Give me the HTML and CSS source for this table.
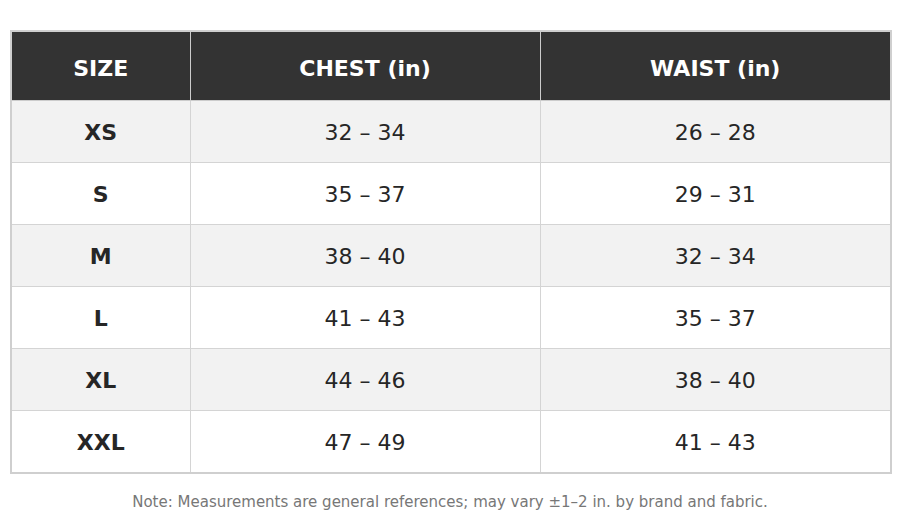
FILE: index.html
```html
<!DOCTYPE html>
<html>
<head>
<meta charset="utf-8">
<link rel="stylesheet" href="styles.css">
</head>
<body>
<div class="page">
  <table class="size-table">
    <colgroup><col class="c1"><col class="c2"><col class="c3"></colgroup>
    <thead>
      <tr><th>SIZE</th><th>CHEST (in)</th><th>WAIST (in)</th></tr>
    </thead>
    <tbody>
      <tr><td class="sz">XS</td><td>32 – 34</td><td>26 – 28</td></tr>
      <tr><td class="sz">S</td><td>35 – 37</td><td>29 – 31</td></tr>
      <tr><td class="sz">M</td><td>38 – 40</td><td>32 – 34</td></tr>
      <tr><td class="sz">L</td><td>41 – 43</td><td>35 – 37</td></tr>
      <tr><td class="sz">XL</td><td>44 – 46</td><td>38 – 40</td></tr>
      <tr><td class="sz">XXL</td><td>47 – 49</td><td>41 – 43</td></tr>
    </tbody>
  </table>
  <p class="note">Note: Measurements are general references; may vary ±1–2 in. by brand and fabric.</p>
</div>
</body>
</html>
```
FILE: styles.css
```css
html, body {
  margin: 0;
  padding: 0;
  background: #fff;
  font-family: "DejaVu Sans", Verdana, sans-serif;
}
.page {
  padding: 30px 10px 0;
}
.size-table {
  width: 880px;
  border-collapse: collapse;
  border: 2px solid #cfcfcf;
  table-layout: fixed;
}
.c1 { width: 179px; }
.c2 { width: 350px; }
.c3 { width: 351px; }
.size-table th {
  background: #333;
  color: #fff;
  font-weight: bold;
  font-size: 22px;
  height: 64px;
  padding: 4px 0 0;
  text-align: center;
  border-left: 1px solid #ccc;
  border-bottom: 1px solid #ccc;
}
.size-table th:first-child { border-left: none; }
.size-table td {
  height: 59px;
  padding: 2px 0 0;
  text-align: center;
  font-size: 22px;
  color: #262626;
  border-left: 1px solid #d4d4d4;
  border-bottom: 1px solid #d4d4d4;
}
.size-table td:first-child { border-left: none; }
.size-table tbody tr:nth-child(odd) td { background: #f2f2f2; }
.size-table tbody tr:last-child td { border-bottom: none; }
.size-table td.sz { font-weight: bold; }
.note {
  margin: 19px 0 0;
  text-align: center;
  font-size: 15px;
  color: #777;
}
```
